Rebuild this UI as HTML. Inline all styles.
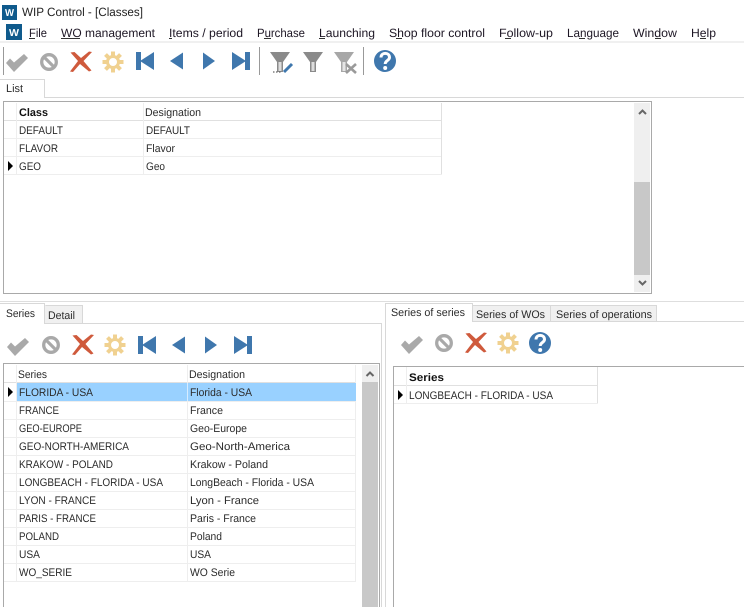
<!DOCTYPE html>
<html><head><meta charset="utf-8"><title>WIP Control - [Classes]</title>
<style>
html,body{margin:0;padding:0;background:#fff;width:744px;height:607px;overflow:hidden}
svg{display:block}
text{font-family:"Liberation Sans",sans-serif;font-size:11px;fill:#2a2a2a;text-rendering:geometricPrecision}
.m{font-size:12px;fill:#1d1624}
.b{font-weight:bold;fill:#111}
.l{fill:#eeeeee}
.h{fill:#e0e0e0}
.u{fill:#333}
</style></head><body>
<svg width="744" height="607" viewBox="0 0 744 607" xmlns="http://www.w3.org/2000/svg">
<defs>
<g id="chk"><path d="M-10 1L-6-3.500L-2 .5L8-8L12-4L-2 10Z" fill="#a9a9a9"/></g>
<g id="no"><circle r="7.300" fill="none" stroke="#a9a9a9" stroke-width="3.300"/><path d="M-5.500-5.500L5.500 5.500" stroke="#a9a9a9" stroke-width="3.200"/></g>
<g id="x"><path d="M-10.500-9.500L-6.500-10L0-4L8-10.500L11-10L2.500-1L10.500 8.500L8 9.500L-1 2L-8 10L-11 9.500L-3-1Z" fill="#cf5a3c"/></g>
<g id="gear"><circle r="5.500" fill="none" stroke="#f0d190" stroke-width="3"/><path d="M0-10.500V-6M0 10.500V6M-10.500 0H-6M10.500 0H6M-7.500-7.500L-4.500-4.500M7.500-7.500L4.500-4.500M-7.500 7.500L-4.500 4.500M7.500 7.500L4.500 4.500" stroke="#f0d190" stroke-width="4"/></g>
<g id="first"><path d="M-9-9H-4V9H-9ZM-5 0L9-9V9Z" fill="#3f77ad"/></g>
<g id="prev"><path d="M-7 0L6-8.500V8.500Z" fill="#3f77ad"/></g>
<g id="next"><path d="M6 0L-6-8.500V8.500Z" fill="#3f77ad"/></g>
<g id="last"><path d="M9-9H4V9H9ZM5 0L-9-9V9Z" fill="#3f77ad"/></g>
<g id="help"><circle r="11" fill="#3f77ad"/><path d="M-4-3.500C-4-9 4.500-9 4.500-3.500C4.500-.5 .2-.5 .2 3" fill="none" stroke="#fff" stroke-width="3"/><circle cx=".2" cy="7" r="2" fill="#fff"/></g>
<g id="fun"><path d="M-10-10H10L3 0V10H-3V0Z" fill="#8a8a8a"/><path d="M-1.500 0V9H1.500V0Z" fill="#dddddd"/></g>
</defs>

<!-- title bar -->
<rect x="2" y="5" width="15" height="15" fill="#0f5a8c"/>
<text x="5" y="16" textLength="9" lengthAdjust="spacingAndGlyphs" style="font-size:10px;font-weight:bold;fill:#fff">W</text>
<text class="m" x="22" y="16" textLength="121" lengthAdjust="spacingAndGlyphs" style="fill:#222">WIP Control - [Classes]</text>

<!-- menu -->
<rect x="6" y="24" width="16" height="16" fill="#0f5a8c"/>
<text x="9" y="36" textLength="10" lengthAdjust="spacingAndGlyphs" style="font-size:10px;font-weight:bold;fill:#fff">W</text>
<text class="m" x="29" y="37" textLength="18" lengthAdjust="spacingAndGlyphs">File</text>
<text class="m" x="61" y="37" textLength="94" lengthAdjust="spacingAndGlyphs">WO management</text>
<text class="m" x="169" y="37" textLength="74" lengthAdjust="spacingAndGlyphs">Items / period</text>
<text class="m" x="257" y="37" textLength="48" lengthAdjust="spacingAndGlyphs">Purchase</text>
<text class="m" x="319" y="37" textLength="56" lengthAdjust="spacingAndGlyphs">Launching</text>
<text class="m" x="389" y="37" textLength="96" lengthAdjust="spacingAndGlyphs">Shop floor control</text>
<text class="m" x="499" y="37" textLength="54" lengthAdjust="spacingAndGlyphs">Follow-up</text>
<text class="m" x="567" y="37" textLength="52" lengthAdjust="spacingAndGlyphs">Language</text>
<text class="m" x="633" y="37" textLength="44" lengthAdjust="spacingAndGlyphs">Window</text>
<text class="m" x="691" y="37" textLength="25" lengthAdjust="spacingAndGlyphs">Help</text>
<rect class="u" x="29" y="38" width="6" height="1"/><rect class="u" x="61" y="38" width="19" height="1"/><rect class="u" x="169" y="38" width="3" height="1"/><rect class="u" x="264" y="38" width="7" height="1"/><rect class="u" x="319" y="38" width="6" height="1"/><rect class="u" x="396" y="38" width="6" height="1"/><rect class="u" x="505" y="38" width="6" height="1"/><rect class="u" x="579" y="38" width="6" height="1"/><rect class="u" x="655" y="38" width="6" height="1"/><rect class="u" x="700" y="38" width="6" height="1"/>
<rect x="0" y="41" width="744" height="2" fill="#f0f0f0"/>

<!-- toolbar -->
<rect x="3" y="47" width="1" height="28" fill="#999"/>
<rect x="259" y="47" width="1" height="28" fill="#999"/>
<rect x="363" y="47" width="1" height="28" fill="#999"/>
<use href="#chk" x="16" y="62"/><use href="#no" x="49" y="62"/><use href="#x" x="81" y="62"/><use href="#gear" x="113" y="62"/>
<use href="#first" x="145" y="61"/><use href="#prev" x="177" y="61"/><use href="#next" x="209" y="61"/><use href="#last" x="241" y="61"/>
<use href="#fun" x="280" y="62"/>
<path d="M273 72H282" stroke="#666" stroke-width="1.200" stroke-dasharray="1.500 1.500"/>
<path d="M284 72L292 64" stroke="#3f77ad" stroke-width="3"/>
<use href="#fun" x="313" y="62"/>
<g opacity=".75"><use href="#fun" x="344" y="62"/></g>
<path d="M346 64L356 73M356 64L346 73" stroke="#9a9a9a" stroke-width="2.600"/>
<use href="#help" x="385" y="61"/>

<!-- tab List -->
<rect x="44" y="97" width="700" height="1" fill="#d8d8d8"/>
<rect x="0" y="79" width="44" height="1" fill="#d8d8d8"/>
<rect x="44" y="79" width="1" height="19" fill="#d8d8d8"/>
<text x="6" y="92" textLength="17" lengthAdjust="spacingAndGlyphs">List</text>

<!-- top grid -->
<rect x="3.500" y="101.500" width="648" height="192" fill="#fff" stroke="#a9a9a9"/>
<rect x="634" y="103" width="16" height="189" fill="#efefef"/>
<rect x="634" y="182" width="16" height="93" fill="#c8c8c8"/>
<path d="M639 114L642.500 110.500L646 114" fill="none" stroke="#666" stroke-width="2"/>
<path d="M639 281L642.500 284.500L646 281" fill="none" stroke="#666" stroke-width="2"/>
<rect class="h" x="4" y="120" width="438" height="1"/>
<rect class="l" x="4" y="138" width="438" height="1"/>
<rect class="l" x="4" y="156" width="438" height="1"/>
<rect class="l" x="4" y="174" width="438" height="1"/>
<rect class="l" x="16" y="103" width="1" height="71"/>
<rect class="l" x="143" y="103" width="1" height="71"/>
<rect class="h" x="441" y="103" width="1" height="71"/>
<path d="M8 161L13 166L8 171Z" fill="#000"/>
<text class="b" x="19" y="116" textLength="29" lengthAdjust="spacingAndGlyphs">Class</text>
<text x="145" y="116" textLength="56" lengthAdjust="spacingAndGlyphs">Designation</text>
<text x="19" y="134" textLength="44" lengthAdjust="spacingAndGlyphs">DEFAULT</text>
<text x="146" y="134" textLength="44" lengthAdjust="spacingAndGlyphs">DEFAULT</text>
<text x="19" y="152" textLength="39" lengthAdjust="spacingAndGlyphs">FLAVOR</text>
<text x="146" y="152" textLength="29" lengthAdjust="spacingAndGlyphs">Flavor</text>
<text x="19" y="170" textLength="22" lengthAdjust="spacingAndGlyphs">GEO</text>
<text x="146" y="170" textLength="19" lengthAdjust="spacingAndGlyphs">Geo</text>

<!-- splitter -->
<rect x="0" y="301" width="744" height="1" fill="#dedede"/>

<!-- left panel -->
<rect x="0" y="303" width="44" height="1" fill="#d8d8d8"/>
<rect x="44" y="303" width="1" height="20" fill="#d8d8d8"/>
<rect x="45" y="305" width="37" height="18" fill="#f0f0f0"/>
<path d="M45.500 305.500H82.500V323" fill="none" stroke="#d8d8d8"/>
<rect x="44" y="323" width="338" height="1" fill="#d8d8d8"/>
<rect x="381" y="323" width="1" height="284" fill="#d8d8d8"/>
<text x="6" y="317" textLength="29" lengthAdjust="spacingAndGlyphs">Series</text>
<text x="48" y="319" textLength="27" lengthAdjust="spacingAndGlyphs">Detail</text>
<use href="#chk" x="17" y="346"/><use href="#no" x="51" y="345"/><use href="#x" x="83" y="345"/><use href="#gear" x="115" y="345"/>
<use href="#first" x="147" y="345"/><use href="#prev" x="179" y="345"/><use href="#next" x="211" y="345"/><use href="#last" x="243" y="345"/>

<!-- series grid -->
<rect x="3" y="363" width="377" height="1" fill="#a9a9a9"/>
<rect x="3" y="363" width="1" height="244" fill="#a9a9a9"/>
<rect x="379" y="363" width="1" height="244" fill="#a9a9a9"/>
<rect x="362" y="365" width="16" height="242" fill="#efefef"/>
<rect x="362" y="382" width="16" height="225" fill="#c8c8c8"/>
<path d="M366.500 376L370 372.500L373.500 376" fill="none" stroke="#666" stroke-width="2"/>
<rect class="h" x="4" y="382" width="352" height="1"/>
<rect class="l" x="4" y="401" width="352" height="1"/><rect class="l" x="4" y="419" width="352" height="1"/><rect class="l" x="4" y="437" width="352" height="1"/><rect class="l" x="4" y="455" width="352" height="1"/><rect class="l" x="4" y="473" width="352" height="1"/><rect class="l" x="4" y="491" width="352" height="1"/><rect class="l" x="4" y="509" width="352" height="1"/><rect class="l" x="4" y="527" width="352" height="1"/><rect class="l" x="4" y="545" width="352" height="1"/><rect class="l" x="4" y="563" width="352" height="1"/><rect class="l" x="4" y="581" width="352" height="1"/>
<rect class="l" x="16" y="365" width="1" height="216"/>
<rect class="l" x="187" y="365" width="1" height="216"/>
<rect class="l" x="355" y="365" width="1" height="216"/>
<rect x="17" y="383" width="339" height="18" fill="#99d1ff"/>
<rect x="187" y="383" width="1" height="18" fill="#d6ecff"/>
<path d="M8 387L13 392L8 397Z" fill="#000"/>
<text x="18" y="378" textLength="29" lengthAdjust="spacingAndGlyphs">Series</text>
<text x="189" y="378" textLength="56" lengthAdjust="spacingAndGlyphs">Designation</text>
<text x="19" y="396" textLength="74" lengthAdjust="spacingAndGlyphs">FLORIDA - USA</text>
<text x="190" y="396" textLength="62" lengthAdjust="spacingAndGlyphs">Florida - USA</text>
<text x="19" y="414" textLength="40" lengthAdjust="spacingAndGlyphs">FRANCE</text>
<text x="190" y="414" textLength="33" lengthAdjust="spacingAndGlyphs">France</text>
<text x="19" y="432" textLength="63" lengthAdjust="spacingAndGlyphs">GEO-EUROPE</text>
<text x="190" y="432" textLength="57" lengthAdjust="spacingAndGlyphs">Geo-Europe</text>
<text x="19" y="450" textLength="110" lengthAdjust="spacingAndGlyphs">GEO-NORTH-AMERICA</text>
<text x="190" y="450" textLength="100" lengthAdjust="spacingAndGlyphs">Geo-North-America</text>
<text x="19" y="468" textLength="94" lengthAdjust="spacingAndGlyphs">KRAKOW - POLAND</text>
<text x="190" y="468" textLength="78" lengthAdjust="spacingAndGlyphs">Krakow - Poland</text>
<text x="19" y="486" textLength="144" lengthAdjust="spacingAndGlyphs">LONGBEACH - FLORIDA - USA</text>
<text x="190" y="486" textLength="124" lengthAdjust="spacingAndGlyphs">LongBeach - Florida - USA</text>
<text x="19" y="504" textLength="77" lengthAdjust="spacingAndGlyphs">LYON - FRANCE</text>
<text x="190" y="504" textLength="69" lengthAdjust="spacingAndGlyphs">Lyon - France</text>
<text x="19" y="522" textLength="77" lengthAdjust="spacingAndGlyphs">PARIS - FRANCE</text>
<text x="190" y="522" textLength="66" lengthAdjust="spacingAndGlyphs">Paris - France</text>
<text x="19" y="540" textLength="40" lengthAdjust="spacingAndGlyphs">POLAND</text>
<text x="190" y="540" textLength="32" lengthAdjust="spacingAndGlyphs">Poland</text>
<text x="19" y="558" textLength="21" lengthAdjust="spacingAndGlyphs">USA</text>
<text x="190" y="558" textLength="21" lengthAdjust="spacingAndGlyphs">USA</text>
<text x="19" y="576" textLength="53" lengthAdjust="spacingAndGlyphs">WO_SERIE</text>
<text x="190" y="576" textLength="45" lengthAdjust="spacingAndGlyphs">WO Serie</text>

<!-- right panel -->
<rect x="385" y="303" width="1" height="304" fill="#d8d8d8"/>
<rect x="385" y="303" width="87" height="1" fill="#d8d8d8"/>
<rect x="472" y="303" width="1" height="19" fill="#d8d8d8"/>
<rect x="473" y="305" width="183" height="17" fill="#f0f0f0"/>
<path d="M473 305.500H656.500V322M550.500 305.500V322" fill="none" stroke="#d8d8d8"/>
<rect x="472" y="321" width="272" height="1" fill="#d8d8d8"/>
<text x="391" y="316" textLength="74" lengthAdjust="spacingAndGlyphs">Series of series</text>
<text x="476" y="318" textLength="69" lengthAdjust="spacingAndGlyphs">Series of WOs</text>
<text x="556" y="318" textLength="96" lengthAdjust="spacingAndGlyphs">Series of operations</text>
<use href="#chk" x="411" y="344"/><use href="#no" x="444" y="343"/><use href="#x" x="476" y="343"/><use href="#gear" x="508" y="343"/><use href="#help" x="540" y="343"/>

<!-- right grid -->
<rect x="393" y="366" width="351" height="1" fill="#a9a9a9"/>
<rect x="393" y="366" width="1" height="241" fill="#a9a9a9"/>
<rect class="h" x="394" y="385" width="204" height="1"/>
<rect class="l" x="394" y="403" width="204" height="1"/>
<rect class="l" x="406" y="367" width="1" height="36"/>
<rect class="h" x="597" y="367" width="1" height="36"/>
<path d="M398 390L403 395L398 400Z" fill="#000"/>
<text class="b" x="409" y="381" textLength="35" lengthAdjust="spacingAndGlyphs">Series</text>
<text x="409" y="399" textLength="144" lengthAdjust="spacingAndGlyphs">LONGBEACH - FLORIDA - USA</text>
</svg>
</body></html>
